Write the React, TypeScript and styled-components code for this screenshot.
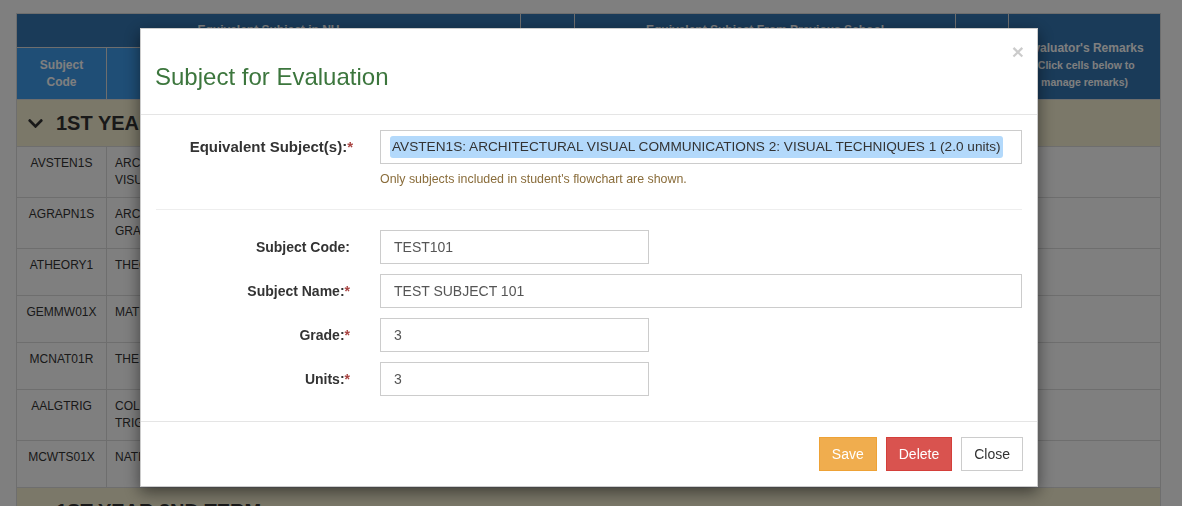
import React from "react";
import styled, { createGlobalStyle } from "styled-components";
import { FaChevronDown } from "react-icons/fa";

const GlobalStyle = createGlobalStyle`
  html, body {
    margin: 0;
    padding: 0;
    background: #fff;
  }
  body {
    font-family: "Liberation Sans", Arial, Helvetica, sans-serif;
    font-size: 14px;
    line-height: 1.42857;
    color: #333;
  }
  * {
    box-sizing: border-box;
  }
`;

type Subject = {
  code: string;
  name: string[];
};

const SUBJECTS: Subject[] = [
  { code: "AVSTEN1S", name: ["ARCHITECTURAL VISUAL COMMUNICATIONS 2:", "VISUAL TECHNIQUES 1"] },
  { code: "AGRAPN1S", name: ["ARCHITECTURAL VISUAL COMMUNICATIONS 1:", "GRAPHICS 1"] },
  { code: "ATHEORY1", name: ["THEORY OF ARCHITECTURE 1"] },
  { code: "GEMMW01X", name: ["MATHEMATICS IN THE MODERN WORLD"] },
  { code: "MCNAT01R", name: ["THE ENVIRONMENT AND SOCIETY"] },
  { code: "AALGTRIG", name: ["COLLEGE ALGEBRA AND", "TRIGONOMETRY"] },
  { code: "MCWTS01X", name: ["NATIONAL SERVICE TRAINING PROGRAM 1"] },
];

const COLUMNS = [90, 285, 84, 45, 54, 83, 201, 51, 46, 53, 152];

const Page = styled.div`
  height: 506px;
  overflow: hidden;
  padding: 13px 0 0 16px;
`;

const Grid = styled.table`
  width: 1144px;
  table-layout: fixed;
  border-collapse: collapse;
  font-size: 12px;
  line-height: 17px;
`;

const HeadCell = styled.th<{ $tone?: "dark" | "light" }>`
  background: ${(p) => (p.$tone === "light" ? "#3e9ced" : "#3476b2")};
  color: #fff;
  font-weight: bold;
  text-align: center;
  vertical-align: middle;
  border: 1px solid #ddd;
  padding: 8px;
`;

const RemarksHead = styled(HeadCell)`
  vertical-align: top;
  padding-top: 25px;
`;

const RemarksTitle = styled.div`
  line-height: 18px;
`;

const RemarksHint = styled.div`
  font-size: 10.5px;
  line-height: 17px;
`;

const TermRow = styled.tr`
  height: 47px;
`;

const TermCell = styled.td`
  background: #f6f0d2;
  border: 1px solid #ddd;
  padding: 0 10px;
  vertical-align: middle;
`;

const TermTitle = styled.div`
  display: flex;
  align-items: center;
  gap: 12px;
  font-size: 20px;
  font-weight: bold;
  line-height: 22px;
  color: #333;
  text-transform: uppercase;
`;

const SubjectRow = styled.tr<{ $tall: boolean }>`
  height: ${(p) => (p.$tall ? 51 : 47)}px;
`;

const Cell = styled.td<{ $center?: boolean }>`
  background: #fff;
  border: 1px solid #ddd;
  padding: 8px;
  vertical-align: top;
  text-align: ${(p) => (p.$center ? "center" : "left")};
  color: #333;
  overflow: hidden;
  white-space: nowrap;
`;

const Backdrop = styled.div`
  position: fixed;
  inset: 0;
  background: rgba(0, 0, 0, 0.5);
`;

const Dialog = styled.div`
  position: absolute;
  top: 28px;
  left: 140px;
  width: 898px;
  background: #fff;
  border: 1px solid rgba(0, 0, 0, 0.2);
  box-shadow: 0 5px 15px rgba(0, 0, 0, 0.5);
`;

const DialogHeader = styled.div`
  display: flex;
  justify-content: space-between;
  align-items: flex-start;
  padding: 15px 15px 15px 14px;
  border-bottom: 1px solid #e5e5e5;
`;

const DialogTitle = styled.h3`
  margin: 20px 0 9px;
  font-size: 24px;
  font-weight: 500;
  line-height: 26px;
  color: #3c763d;
`;

const Dismiss = styled.button`
  margin: -3px -2px 0 0;
  padding: 0;
  border: 0;
  background: transparent;
  font-family: inherit;
  font-size: 21px;
  font-weight: bold;
  line-height: 1;
  color: #000;
  opacity: 0.2;
  cursor: pointer;
`;

const DialogBody = styled.div`
  padding: 15px;
`;

const FieldRow = styled.div`
  display: grid;
  grid-template-columns: 25% 75%;
  margin: 0 -15px 10px;
`;

const Label = styled.label<{ $large?: boolean }>`
  padding: 7px ${(p) => (p.$large ? 12 : 15)}px 0 15px;
  text-align: right;
  font-weight: bold;
  font-size: ${(p) => (p.$large ? 15 : 14)}px;
  line-height: 20px;
  color: #333;
  white-space: nowrap;
`;

const Required = styled.span`
  color: #a94442;
`;

const Control = styled.div`
  padding: 0 15px;
`;

const Input = styled.input<{ $narrow?: boolean }>`
  display: block;
  width: ${(p) => (p.$narrow ? "269px" : "100%")};
  height: 34px;
  padding: 6px 13px;
  border: 1px solid #ccc;
  border-radius: 0;
  font-family: inherit;
  font-size: 14px;
  color: #555;
  background: #fff;
  outline: none;
`;

const SelectBox = styled.div`
  display: flex;
  align-items: center;
  height: 34px;
  padding: 0 9px;
  border: 1px solid #ccc;
  background: #fff;
`;

const Picked = styled.span`
  height: 22px;
  padding: 0 2px;
  line-height: 22px;
  border-radius: 3px;
  background: #b3d9fb;
  color: #333;
  font-size: 13.65px;
  white-space: nowrap;
`;

const HelpText = styled.p`
  margin: 7px 0 0;
  font-size: 12.4px;
  line-height: 17px;
  color: #8a6d3b;
`;

const Divider = styled.hr`
  margin: 21px 0 20px;
  border: 0;
  border-top: 1px solid #eee;
`;

const DialogFooter = styled.div`
  display: flex;
  justify-content: flex-end;
  gap: 9px;
  padding: 15px 14px 15px 15px;
  border-top: 1px solid #e5e5e5;
`;

const BUTTON_TONES = {
  warning: { bg: "#f0ad4e", border: "#eea236", color: "#fff" },
  danger: { bg: "#d9534f", border: "#d43f3a", color: "#fff" },
  plain: { bg: "#fff", border: "#ccc", color: "#333" },
};

const Button = styled.button<{ $tone: keyof typeof BUTTON_TONES }>`
  height: 34px;
  padding: 6px 12px;
  font-family: inherit;
  font-size: 14px;
  line-height: 20px;
  border: 1px solid ${(p) => BUTTON_TONES[p.$tone].border};
  border-radius: 0;
  background: ${(p) => BUTTON_TONES[p.$tone].bg};
  color: ${(p) => BUTTON_TONES[p.$tone].color};
  cursor: pointer;
`;

const Term = ({ title }: { title: string }) => (
  <TermRow>
    <TermCell colSpan={11}>
      <TermTitle>
        <FaChevronDown size={17} />
        {title}
      </TermTitle>
    </TermCell>
  </TermRow>
);

const Field = ({
  label,
  value,
  required,
  narrow,
}: {
  label: string;
  value: string;
  required?: boolean;
  narrow?: boolean;
}) => (
  <FieldRow>
    <Label>
      {label}
      {required && <Required>*</Required>}
    </Label>
    <Control>
      <Input $narrow={narrow} defaultValue={value} />
    </Control>
  </FieldRow>
);

export default function App() {
  return (
    <>
      <GlobalStyle />
      <Page>
        <Grid>
          <colgroup>
            {COLUMNS.map((w, i) => (
              <col key={i} style={{ width: w }} />
            ))}
          </colgroup>
          <thead>
            <tr>
              <HeadCell colSpan={4}>Equivalent Subject in NU</HeadCell>
              <HeadCell rowSpan={2}>Credit</HeadCell>
              <HeadCell colSpan={4}>Equivalent Subject From Previous School</HeadCell>
              <HeadCell rowSpan={2}>Status</HeadCell>
              <RemarksHead rowSpan={2}>
                <RemarksTitle>Evaluator's Remarks</RemarksTitle>
                <RemarksHint>
                  (Click cells below to
                  <br />
                  manage remarks)
                </RemarksHint>
              </RemarksHead>
            </tr>
            <tr>
              <HeadCell $tone="light">
                Subject
                <br />
                Code
              </HeadCell>
              <HeadCell $tone="light">Subject Name</HeadCell>
              <HeadCell $tone="light">Units</HeadCell>
              <HeadCell $tone="light">Grade</HeadCell>
              <HeadCell $tone="light">
                Subject
                <br />
                Code
              </HeadCell>
              <HeadCell $tone="light">Subject Name</HeadCell>
              <HeadCell $tone="light">Grade</HeadCell>
              <HeadCell $tone="light">Units</HeadCell>
            </tr>
          </thead>
          <tbody>
            <Term title="1st Year 1st Term" />
            {SUBJECTS.map((s) => (
              <SubjectRow key={s.code} $tall={s.name.length > 1}>
                <Cell $center>{s.code}</Cell>
                <Cell>
                  {s.name.map((line, i) => (
                    <div key={i}>{line}</div>
                  ))}
                </Cell>
                <Cell $center>3.0</Cell>
                <Cell $center />
                <Cell $center />
                <Cell />
                <Cell />
                <Cell $center />
                <Cell $center />
                <Cell $center />
                <Cell />
              </SubjectRow>
            ))}
            <Term title="1st Year 2nd Term" />
          </tbody>
        </Grid>
      </Page>

      <Backdrop>
        <Dialog>
          <DialogHeader>
            <DialogTitle>Subject for Evaluation</DialogTitle>
            <Dismiss aria-label="Close">×</Dismiss>
          </DialogHeader>
          <DialogBody>
            <FieldRow>
              <Label $large>
                Equivalent Subject(s):<Required>*</Required>
              </Label>
              <Control>
                <SelectBox>
                  <Picked>
                    AVSTEN1S: ARCHITECTURAL VISUAL COMMUNICATIONS 2: VISUAL TECHNIQUES 1 (2.0 units)
                  </Picked>
                </SelectBox>
                <HelpText>Only subjects included in student's flowchart are shown.</HelpText>
              </Control>
            </FieldRow>
            <Divider />
            <Field label="Subject Code:" value="TEST101" narrow />
            <Field label="Subject Name:" value="TEST SUBJECT 101" required />
            <Field label="Grade:" value="3" required narrow />
            <Field label="Units:" value="3" required narrow />
          </DialogBody>
          <DialogFooter>
            <Button $tone="warning">Save</Button>
            <Button $tone="danger">Delete</Button>
            <Button $tone="plain">Close</Button>
          </DialogFooter>
        </Dialog>
      </Backdrop>
    </>
  );
}
